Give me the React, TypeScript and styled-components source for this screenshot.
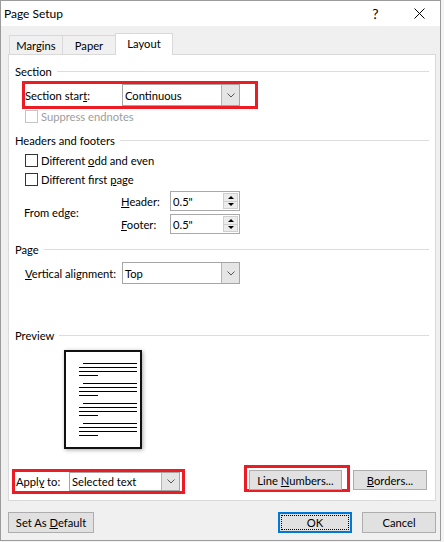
import React from 'react';
import styled, { createGlobalStyle } from 'styled-components';

const FONT = `"Segoe UI", Lato, "Liberation Sans", sans-serif`;

const GlobalStyle = createGlobalStyle`
  html, body {
    margin: 0;
    padding: 0;
    background: #f4f4f4;
  }
  body {
    font-family: ${FONT};
    font-size: 11.2px;
    color: #000;
  }
`;

const Window = styled.div`
  width: 441px;
  height: 541px;
  box-sizing: border-box;
  border: 1px solid #9b9b9b;
  background: #f0f0f0;
  display: flex;
  flex-direction: column;
  white-space: nowrap;
`;

const TitleBar = styled.div`
  height: 25px;
  flex-shrink: 0;
  background: #fff;
  display: flex;
  align-items: center;
`;

const Title = styled.div`
  flex: 1;
  padding-left: 3px;
  font-size: 12px;
`;

const CaptionButton = styled.div<{ $w: number }>`
  width: ${(p) => p.$w}px;
  height: 25px;
  display: flex;
  align-items: center;
  justify-content: center;
  font-size: 14px;
`;

const Body = styled.div`
  flex: 1;
  display: flex;
  flex-direction: column;
  padding: 7px 4px 0 7px;
`;

const TabRow = styled.div`
  display: flex;
  align-items: flex-end;
  height: 21px;
  padding-left: 1px;
  position: relative;
  z-index: 1;
`;

const Tab = styled.div<{ $w: number; $active?: boolean; $first?: boolean }>`
  box-sizing: border-box;
  width: ${(p) => p.$w}px;
  height: ${(p) => (p.$active ? 22 : 19)}px;
  margin-bottom: ${(p) => (p.$active ? -1 : 0)}px;
  margin-left: ${(p) => (p.$first ? 0 : -1)}px;
  border: 1px solid #d9d9d9;
  border-bottom: none;
  background: ${(p) => (p.$active ? '#fff' : '#f0f0f0')};
  display: flex;
  align-items: center;
  justify-content: center;
  padding-bottom: ${(p) => (p.$active ? 2 : 0)}px;
`;

const Panel = styled.div`
  height: 447px;
  box-sizing: border-box;
  border: 1px solid #d9d9d9;
  background: #fff;
  display: flex;
  flex-direction: column;
  padding: 8px 6px 0 6px;
`;

const GroupHeading = styled.div<{ $mt: number }>`
  display: flex;
  align-items: center;
  gap: 5px;
  height: 16px;
  margin-top: ${(p) => p.$mt}px;
  &::after {
    content: '';
    flex: 1;
    height: 1px;
    background: #dcdcdc;
  }
`;

const Highlight = styled.div<{ $w: number; $h: number }>`
  box-sizing: border-box;
  width: ${(p) => p.$w}px;
  height: ${(p) => p.$h}px;
  border: 3px solid #ed1c24;
  display: flex;
  align-items: center;
`;

const SectionHighlight = styled(Highlight)`
  margin: 2px 0 0 7px;
`;

const ApplyHighlight = styled(Highlight)`
  margin: 4px 0 0 -3px;
  padding-left: 1px;
`;

const LineNumHighlight = styled(Highlight)`
  align-items: flex-start;
  padding: 2px 0 0 2px;
`;

const FieldLabel = styled.span<{ $w: number }>`
  width: ${(p) => p.$w}px;
  flex-shrink: 0;
  white-space: nowrap;
`;

const U = styled.span`
  text-decoration: underline;
`;

const DropBox = styled.div<{ $w: number; $h: number }>`
  box-sizing: border-box;
  width: ${(p) => p.$w}px;
  height: ${(p) => p.$h}px;
  border: 1px solid #a5a5a5;
  background: #fff;
  display: flex;
  align-items: stretch;
`;

const DropValue = styled.div`
  flex: 1;
  padding-left: 2px;
  display: flex;
  align-items: center;
`;

const DropArrow = styled.div`
  width: 17px;
  background: #e5e5e5;
  border-left: 1px solid #b4b4b4;
  display: flex;
  align-items: center;
  justify-content: center;
`;

const Dropdown = ({ value, w, h }: { value: string; w: number; h: number }) => (
  <DropBox $w={w} $h={h}>
    <DropValue>{value}</DropValue>
    <DropArrow>
      <svg width="8" height="5" viewBox="0 0 8 5">
        <polyline points="0.5,0.5 4,4 7.5,0.5" fill="none" stroke="#555" strokeWidth="1" />
      </svg>
    </DropArrow>
  </DropBox>
);

const CheckRow = styled.div<{ $h: number; $mt?: number; $disabled?: boolean }>`
  display: flex;
  align-items: center;
  gap: 3px;
  padding-left: 10px;
  height: ${(p) => p.$h}px;
  margin-top: ${(p) => p.$mt ?? 0}px;
  color: ${(p) => (p.$disabled ? '#9d9d9d' : '#000')};
`;

const Box = styled.span<{ $disabled?: boolean }>`
  width: 13px;
  height: 13px;
  box-sizing: border-box;
  border: 1px solid ${(p) => (p.$disabled ? '#c4c4c4' : '#333')};
  background: #fff;
  flex-shrink: 0;
`;

const FromEdge = styled.div`
  display: flex;
  align-items: center;
  padding-left: 9px;
  margin-top: 2px;
`;

const EdgeRows = styled.div`
  display: flex;
  flex-direction: column;
  gap: 3px;
`;

const EdgeRow = styled.div`
  display: flex;
  align-items: center;
  height: 20px;
`;

const SpinField = styled.div`
  box-sizing: border-box;
  width: 70px;
  height: 20px;
  border: 1px solid #a9a9a9;
  background: #fff;
  display: flex;
`;

const SpinValue = styled.div`
  flex: 1;
  padding-left: 2px;
  display: flex;
  align-items: center;
`;

const SpinButtons = styled.div`
  width: 15px;
  margin: 1px 1px 1px 0;
  display: flex;
  flex-direction: column;
`;

const SpinBtn = styled.div<{ $up?: boolean }>`
  flex: 1;
  box-sizing: border-box;
  background: #ececec;
  border: 1px solid #cfcfcf;
  margin-top: ${(p) => (p.$up ? 0 : -1)}px;
  display: flex;
  align-items: center;
  justify-content: center;
  &::before {
    content: '';
    width: 0;
    height: 0;
    border-left: 3px solid transparent;
    border-right: 3px solid transparent;
    ${(p) => (p.$up ? 'border-bottom: 3px solid #000;' : 'border-top: 3px solid #000;')}
  }
`;

const SpinBox = ({ value }: { value: string }) => (
  <SpinField>
    <SpinValue>{value}</SpinValue>
    <SpinButtons>
      <SpinBtn $up />
      <SpinBtn />
    </SpinButtons>
  </SpinField>
);

const FieldRow = styled.div<{ $mt: number }>`
  display: flex;
  align-items: center;
  padding-left: 10px;
  margin-top: ${(p) => p.$mt}px;
  height: 22px;
`;

const PreviewPage = styled.div`
  box-sizing: border-box;
  width: 78px;
  height: 99px;
  margin: 7px 0 0 49px;
  border: 2px solid #111;
  background: #fff;
  box-shadow: 1px 1px 4px rgba(0, 0, 0, 0.35);
  padding: 11px 0 0 13px;
  display: flex;
  flex-direction: column;
  gap: 7px;
`;

const Paragraph = styled.div`
  display: flex;
  flex-direction: column;
  gap: 3px;
`;

const TextLine = styled.div<{ $w: number; $indent?: number }>`
  height: 1px;
  width: ${(p) => p.$w}px;
  margin-left: ${(p) => p.$indent ?? 0}px;
  background: #000;
`;

const ApplyRow = styled.div`
  display: flex;
  align-items: flex-start;
  margin-top: 16px;
`;

const Spacer = styled.div`
  flex: 1;
`;

const Button = styled.button<{ $w: number; $h: number; $default?: boolean }>`
  box-sizing: border-box;
  width: ${(p) => p.$w}px;
  height: ${(p) => p.$h}px;
  padding: 0;
  border: ${(p) => (p.$default ? '2px solid #0078d7' : '1px solid #adadad')};
  background: #e1e1e1;
  font-family: ${FONT};
  font-size: 11.2px;
  color: #000;
  flex-shrink: 0;
  ${(p) => (p.$default ? 'outline: 1px dotted #000; outline-offset: -4px;' : '')}
`;

const BordersButton = styled(Button)`
  margin: 5px 2px 0 3px;
`;

const BottomBar = styled.div`
  display: flex;
  align-items: center;
  margin-top: 11px;
  gap: 10px;
`;

const Preview = () => (
  <PreviewPage>
    {[0, 1, 2, 3].map((i) => (
      <Paragraph key={i}>
        <TextLine $w={54} $indent={4} />
        <TextLine $w={58} />
        <TextLine $w={58} />
        <TextLine $w={19} />
      </Paragraph>
    ))}
  </PreviewPage>
);

export default function App() {
  return (
    <>
      <GlobalStyle />
      <Window>
        <TitleBar>
          <Title>Page Setup</Title>
          <CaptionButton $w={45}>?</CaptionButton>
          <CaptionButton $w={42}>
            <svg width="11" height="11" viewBox="0 0 11 11">
              <path d="M0.5 0.5 L10.5 10.5 M10.5 0.5 L0.5 10.5" stroke="#000" strokeWidth="1" />
            </svg>
          </CaptionButton>
        </TitleBar>
        <Body>
          <TabRow>
            <Tab $w={54} $first>Margins</Tab>
            <Tab $w={54}>Paper</Tab>
            <Tab $w={58} $active>Layout</Tab>
          </TabRow>
          <Panel>
            <GroupHeading $mt={0}>Section</GroupHeading>
            <SectionHighlight $w={236} $h={28}>
              <FieldLabel $w={97}>
                Section star<U>t</U>:
              </FieldLabel>
              <Dropdown value="Continuous" w={118} h={22} />
            </SectionHighlight>
            <CheckRow $h={15} $disabled>
              <Box $disabled />
              Suppress endnotes
            </CheckRow>

            <GroupHeading $mt={8}>Headers and footers</GroupHeading>
            <CheckRow $h={19} $mt={3}>
              <Box />
              <span>
                Different <U>o</U>dd and even
              </span>
            </CheckRow>
            <CheckRow $h={19}>
              <Box />
              <span>
                Different first <U>p</U>age
              </span>
            </CheckRow>
            <FromEdge>
              <FieldLabel $w={97}>From edge:</FieldLabel>
              <EdgeRows>
                <EdgeRow>
                  <FieldLabel $w={49}>
                    <U>H</U>eader:
                  </FieldLabel>
                  <SpinBox value={'0.5"'} />
                </EdgeRow>
                <EdgeRow>
                  <FieldLabel $w={49}>
                    <U>F</U>ooter:
                  </FieldLabel>
                  <SpinBox value={'0.5"'} />
                </EdgeRow>
              </EdgeRows>
            </FromEdge>

            <GroupHeading $mt={7}>Page</GroupHeading>
            <FieldRow $mt={5}>
              <FieldLabel $w={97}>
                <U>V</U>ertical alignment:
              </FieldLabel>
              <Dropdown value="Top" w={118} h={22} />
            </FieldRow>

            <GroupHeading $mt={43}>Preview</GroupHeading>
            <Preview />

            <ApplyRow>
              <ApplyHighlight $w={173} $h={25}>
                <FieldLabel $w={53}>
                  Appl<U>y</U> to:
                </FieldLabel>
                <Dropdown value="Selected text" w={111} h={19} />
              </ApplyHighlight>
              <Spacer />
              <LineNumHighlight $w={106} $h={27}>
                <Button $w={93} $h={20}>
                  Line <U>N</U>umbers...
                </Button>
              </LineNumHighlight>
              <BordersButton $w={74} $h={20}>
                <U>B</U>orders...
              </BordersButton>
            </ApplyRow>
          </Panel>
          <BottomBar>
            <Button $w={86} $h={21}>
              Set As <U>D</U>efault
            </Button>
            <Spacer />
            <Button $w={74} $h={21} $default>
              OK
            </Button>
            <Button $w={74} $h={21}>
              Cancel
            </Button>
          </BottomBar>
        </Body>
      </Window>
    </>
  );
}
